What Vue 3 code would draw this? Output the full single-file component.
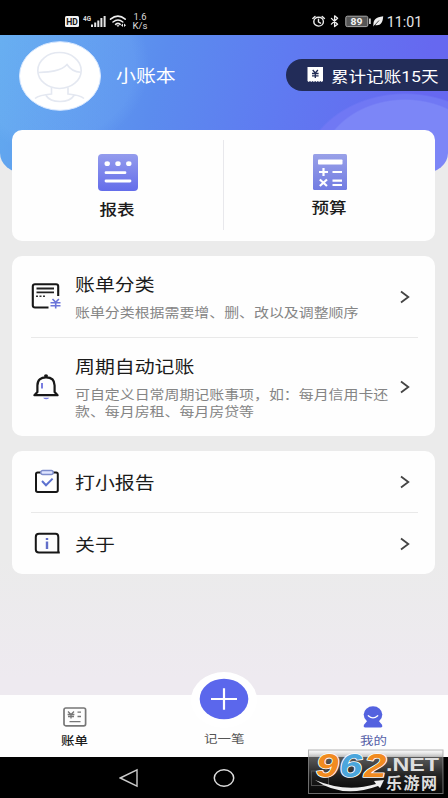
<script setup>
const groups = [
  {
    rows: [
      { title: '账单分类', lines: ['账单分类根据需要增、删、改以及调整顺序'], icon: 'bill', kind: 'single' },
      {
        title: '周期自动记账',
        lines: ['可自定义日常周期记账事项，如：每月信用卡还', '款、每月房租、每月房贷等'],
        icon: 'bell',
        kind: 'double'
      }
    ]
  },
  {
    rows: [
      { title: '打小报告', lines: [], icon: 'clip', kind: 'plain' },
      { title: '关于', lines: [], icon: 'info', kind: 'plain' }
    ]
  }
]
</script>

<template>
  <div class="screen">
    <div class="status">
      <svg class="status-left" width="90" height="24" viewBox="0 0 90 24">
        <rect x="0" y="6" width="14" height="11" rx="1.5" fill="#f2f2f2" />
        <text x="1.2" y="14.8" font-size="8.5" font-weight="700" fill="#111" textLength="11.6" lengthAdjust="spacingAndGlyphs">HD</text>
        <text x="18" y="11" font-size="7" font-weight="700" fill="#ddd" textLength="8" lengthAdjust="spacingAndGlyphs">4G</text>
        <g fill="#e4e4e4">
          <rect x="26" y="14.5" width="2" height="2.5" /><rect x="29.2" y="12.5" width="2" height="4.5" />
          <rect x="32.3" y="10.5" width="2" height="6.5" /><rect x="35.4" y="8" width="2" height="9" />
          <rect x="38.6" y="6" width="2" height="11" />
        </g>
        <g fill="none" stroke="#eee" stroke-width="1.6" stroke-linecap="round">
          <path d="M45.5 9.2Q53 3.2 60.2 9.2M48 12Q53 8 57.8 12M50.6 14.3Q53 12.5 55.2 14.3" />
        </g>
        <path d="M51.3 15.2h3.2L53 17zM56 15.2l2-1.7v3.4zM61 15.2l-2-1.7v3.4z" fill="#eee" />
        <text x="68.5" y="9.5" font-size="8.5" fill="#ddd" textLength="13" lengthAdjust="spacingAndGlyphs">1.6</text>
        <text x="67.5" y="19.3" font-size="8.5" fill="#ddd" textLength="15" lengthAdjust="spacingAndGlyphs">K/s</text>
      </svg>
      <svg class="status-right" width="112" height="24" viewBox="0 0 112 24">
        <g fill="none" stroke="#eee" stroke-width="1.4" stroke-linecap="round" stroke-linejoin="round">
          <ellipse cx="6.6" cy="11.7" rx="4.8" ry="4.4" />
          <path d="M6.5 9.2V12l2 1.2M.8 8.4 3 6.4M10.2 6.4l2.2 2" />
          <path d="M19.4 8.4l6.2 5.8-3 2.3V5.8l3 2.5-6.2 5.8" stroke-width="1.3" />
        </g>
        <rect x="33.8" y="6.2" width="22" height="10.4" rx="1.5" fill="#555" stroke="#aaa" />
        <rect x="57" y="8.5" width="1.8" height="5.5" fill="#ccc" />
        <text x="38.6" y="14.7" font-size="9" font-weight="700" fill="#f2f2f2" textLength="12" lengthAdjust="spacingAndGlyphs">89</text>
        <path d="M61.4 16.5C61 9 64 7.2 71.2 6.3 70.8 13.4 68 16.2 62.8 15z" fill="#eee" />
        <path d="m62 16 5-5.5" stroke="#000" stroke-width=".7" />
        <text x="74.8" y="16.5" font-size="14" fill="#e6e6e6" textLength="35.5" lengthAdjust="spacingAndGlyphs">11:01</text>
      </svg>
    </div>

    <header class="hero">
      <svg class="avatar" width="82" height="70" viewBox="0 0 82 70">
        <ellipse cx="41" cy="35" rx="40.5" ry="34.3" fill="#fff" stroke="#d6e7ff" />
        <g fill="none" stroke="#e4e8f1" stroke-width="1.6">
          <ellipse cx="40.5" cy="29.5" rx="21.7" ry="18" />
          <path d="M19.5 31.5C29 31 42 30.5 48 23.5Q53 31 61.5 31.2" />
          <path d="M32.5 46.5v6.5Q20 54 16 57.5M49 46.5v6.5Q61 54 65 57.5M27 54.5c5 8 23 8 28 0" />
        </g>
      </svg>
      <div class="name"><span class="wide">小账本</span></div>
      <div class="streak">
        <svg width="17" height="16" viewBox="0 0 17 16">
          <path d="M.5 0h15.5v14l-1.3 1-1.3-1-1.3 1-1.3-1-1.3 1-1.3-1-1.3 1-1.3-1-1.3 1-1.3-1-1.3 1L.5 14z" fill="#fff" />
          <path d="m5.7 3 2.6 3 2.6-3M5 6.5h6.6M5 8.8h6.6M8.3 6v5" stroke="#222d56" stroke-width="1.3" fill="none" />
        </svg>
        <span class="wide">累计记账15天</span>
      </div>
    </header>

    <main class="content">
      <section class="card overview">
        <div class="entry">
          <svg width="40" height="37" viewBox="0 0 40 37">
            <defs><linearGradient id="report" x2="0" y2="1"><stop stop-color="#949ced" /><stop offset="1" stop-color="#646dea" /></linearGradient></defs>
            <rect width="40" height="37" rx="4" fill="url(#report)" />
            <g fill="#fff"><ellipse cx="9.2" cy="9.7" rx="2.7" ry="2.4" /><ellipse cx="20" cy="9.7" rx="2.7" ry="2.4" /><ellipse cx="30.8" cy="9.7" rx="2.7" ry="2.4" /></g>
            <path d="M8 18.7h19M8 27h24" stroke="#fff" stroke-width="2.8" stroke-linecap="round" />
          </svg>
          <span class="wide">报表</span>
        </div>
        <i class="divider"></i>
        <div class="entry budget">
          <svg width="34" height="36" viewBox="0 0 34 36">
            <defs><linearGradient id="budget" x2="0" y2="1"><stop stop-color="#99a1e8" /><stop offset="1" stop-color="#727ce2" /></linearGradient></defs>
            <rect width="34" height="36" rx="1.5" fill="url(#budget)" />
            <rect x="5" y="5.5" width="24.5" height="5" rx=".8" fill="#fff" />
            <path d="M6 18h9M10.5 14v8M19.5 18H29M6.8 25.5l7.2 6.5M14 25.5 6.8 32M19.5 26.6H29M19.5 31H29" stroke="#fff" stroke-width="2.2" />
          </svg>
          <span class="wide">预算</span>
        </div>
      </section>

      <section v-for="(group, g) in groups" :key="g" class="card list">
        <div v-for="row in group.rows" :key="row.title" class="row" :class="row.kind">
          <div class="glyph">
            <svg v-if="row.icon === 'bill'" width="32" height="30" viewBox="0 0 32 30" fill="none">
              <path d="M17.5 25.5H4Q1.8 25.5 1.8 23.5V4.2Q1.8 2.2 4 2.2H25Q27.2 2.2 27.2 4.2V14" stroke="#171717" stroke-width="2.1" />
              <path d="M5.5 6.5h17.5M5.5 10.3h17.5" stroke="#222" stroke-width="1.8" />
              <path d="M5 14.3h10" stroke="#333" stroke-width="1.5" stroke-dasharray="2 1.5" />
              <path d="m21.5 17 3.2 3.3 3.2-3.3M19.5 20.8h10M19.5 23.8h10M24.7 20v6.6" stroke="#6b75d9" stroke-width="1.6" />
            </svg>
            <svg v-else-if="row.icon === 'bell'" class="bell" width="28" height="28" viewBox="0 0 28 28" fill="none">
              <ellipse cx="14" cy="2.8" rx="2" ry="1.6" fill="#171717" />
              <path d="M5.4 19V12.5C5.4 7 8.8 4.3 14 4.3s8.6 2.7 8.6 8.2V19l3 3.2H2.4z" stroke="#171717" stroke-width="2.2" stroke-linecap="round" stroke-linejoin="round" />
              <path d="M10 10v5.5" stroke="#7a7ee0" stroke-width="2" />
              <path d="M11 24.7h6.4q-3.2 3.2-6.4 0z" fill="#7a7ee0" />
            </svg>
            <svg v-else-if="row.icon === 'clip'" class="clip" width="26" height="25" viewBox="0 0 26 25" fill="none">
              <rect x="2" y="3.4" width="21.8" height="19.5" rx="1.7" stroke="#171717" stroke-width="2" />
              <rect x="6.8" y="1.5" width="12.4" height="4" rx="2" fill="#dfe5ff" stroke="#7d8ccb" stroke-width="1.4" />
              <path d="m8 12 4 4.2 6.6-6.6" stroke="#5c71cf" stroke-width="2" />
            </svg>
            <svg v-else class="info" width="27" height="23" viewBox="0 0 27 23" fill="none">
              <path d="M5 1.8H21.5Q24.3 1.8 24.3 5V20.5H5Q1.8 20.5 1.8 17.5V5Q1.8 1.8 5 1.8zM23 20.5h2.8" stroke="#171717" stroke-width="2" />
              <path d="M13 6v2M13 9.5V17" stroke="#626fc9" stroke-width="2.4" />
            </svg>
          </div>
          <div class="copy">
            <div class="title"><span class="wide">{{ row.title }}</span></div>
            <div v-if="row.lines.length" class="detail">
              <div v-for="line in row.lines" :key="line"><span class="wide">{{ line }}</span></div>
            </div>
          </div>
          <svg class="chevron" width="12" height="16" viewBox="0 0 12 16"><path d="m2 2.5 7.3 5.5L2 13.5" fill="none" stroke="#444" stroke-width="1.8" /></svg>
        </div>
      </section>
    </main>

    <nav class="tabs">
      <div class="tab">
        <svg width="24" height="20" viewBox="0 0 24 20" fill="none" stroke="#777">
          <rect x="1" y="1" width="21.6" height="17.8" rx="1.8" stroke-width="1.7" />
          <path d="m5 4.5 3 3 3-3M4.6 7.5h6.8M5 9.5h6M8 7v4.5M14.5 5.2H18M14.5 9.5H18M6.5 14.6h11" stroke-width="1.3" />
        </svg>
        <span class="wide">账单</span>
      </div>
      <div class="tab add">
        <svg width="66" height="56" viewBox="0 0 66 56">
          <ellipse cx="33" cy="28" rx="33" ry="28" fill="#fff" />
          <ellipse cx="33" cy="27" rx="24.3" ry="20.3" fill="#5b67ec" />
          <path d="M20 27h26M33 16.3v21.4" stroke="#fff" stroke-width="2.2" />
        </svg>
        <span class="wide">记一笔</span>
      </div>
      <div class="tab mine">
        <svg width="20" height="22" viewBox="0 0 20 22">
          <ellipse cx="10" cy="8.6" rx="9.3" ry="8.3" fill="#5462df" />
          <path d="M5 14 1 18.8q-1 2.7 1.3 2.7h15.4q2.3 0 1.3-2.7L15 14z" fill="#5462df" />
          <path d="M5.3 9.8Q10 14 14.7 9.8" fill="none" stroke="#fff" stroke-width="1.3" stroke-linecap="round" />
        </svg>
        <span class="wide">我的</span>
      </div>
    </nav>

    <div class="system">
      <svg width="20" height="20" viewBox="0 0 20 20"><path d="M1.2 10 18 1.8v16.4z" fill="none" stroke="#ccc" stroke-width="1.4" /></svg>
      <svg width="22" height="20" viewBox="0 0 22 20"><ellipse cx="11" cy="10" rx="9.7" ry="8.2" fill="none" stroke="#ddd" stroke-width="1.5" /></svg>
      <svg width="20" height="20" viewBox="0 0 20 20"><rect x="1.5" y="3" width="17" height="14.5" fill="none" stroke="#888" /></svg>
    </div>

    <svg class="mark" width="136" height="58" viewBox="0 -12 136 58">
      <defs><linearGradient id="shade" x2="0" y2="1"><stop stop-color="#ddd" stop-opacity=".12" /><stop offset=".17" stop-color="#888" stop-opacity=".65" /><stop offset=".55" stop-color="#333" stop-opacity=".75" /><stop offset="1" stop-color="#111" stop-opacity=".4" /></linearGradient></defs>
      <rect x=".5" y="1" width="134.5" height="43.5" fill="url(#shade)" stroke="#999" stroke-opacity=".7" />
      <g class="digits" font-size="33" paint-order="stroke" stroke="#fff" stroke-width="1.6" stroke-linejoin="round">
        <text x="8" y="27.5" fill="#f18b20" textLength="22.5" lengthAdjust="spacingAndGlyphs">9</text>
        <text x="31.5" y="27.5" fill="#4ba6dc" textLength="22.5" lengthAdjust="spacingAndGlyphs">6</text>
        <text x="56" y="27.5" fill="#f18b20" textLength="22.5" lengthAdjust="spacingAndGlyphs">2</text>
      </g>
      <text class="net" x="78" y="22" font-size="18.5" fill="#dedede" textLength="53" lengthAdjust="spacingAndGlyphs">.NET</text>
      <text x="78" y="40" font-size="16" font-weight="700" fill="#ddd" textLength="51" lengthAdjust="spacing">乐游网</text>
      <path d="M7 31Q38 44 68 35l-2-3 10-1-4 8-2-2Q34 50 7 31z" fill="#eee" />
    </svg>
  </div>
</template>

<style>
body { margin: 0; background: #000; }
</style>

<style scoped>
.screen {
  position: relative;
  display: flex;
  flex-direction: column;
  width: 448px;
  height: 798px;
  overflow: hidden;
  background: linear-gradient(#ebebeb 70%, #eeeaf0 85%);
  color: #1b1b1b;
  font-family: Roboto, "Noto Sans CJK SC", sans-serif;
}
.wide { display: inline-block; white-space: nowrap; transform: scaleX(1.17); }
.status {
  display: flex;
  justify-content: space-between;
  flex: none;
  box-sizing: border-box;
  height: 35px;
  padding: 10px 24px 0 65px;
  background: #000;
}
.hero {
  display: flex;
  align-items: flex-start;
  flex: none;
  box-sizing: border-box;
  height: 138px;
  padding: 6px 0 0 19px;
  border-radius: 0 0 24px 24px / 0 0 20px 20px;
  background:
    radial-gradient(ellipse 86px 70px at 405px 134px, #7c86f7 98%, transparent 100%),
    radial-gradient(ellipse 104px 84px at 405px 142px, #7078f4 98%, transparent 100%),
    radial-gradient(ellipse 97px 88px at 52px 30px, rgba(130, 190, 250, .16) 85%, transparent),
    linear-gradient(105deg, #63acef 0%, #5b8cee 35%, #5f7bf1 60%, #6668f0 90%);
}
.name { margin: 23px 0 0 15px; color: #fff; font-size: 17px; line-height: 24px; }
.name .wide { transform-origin: left; }
.streak {
  display: flex;
  align-items: center;
  gap: 7px;
  box-sizing: border-box;
  width: 162px;
  height: 32px;
  margin: 18px 0 0 auto;
  padding-left: 21px;
  border-radius: 17px 0 0 17px;
  background: #222c58;
  color: #fff;
  font-size: 15px;
}
.streak .wide { transform-origin: left; }
.content { display: flex; flex: 1; flex-direction: column; gap: 15.5px; margin-top: -43px; padding: 0 13px 0 12px; }
.card { border-radius: 10px; background: #fefefe; }
.overview { display: flex; height: 110.5px; }
.entry {
  display: flex;
  flex: 1;
  flex-direction: column;
  align-items: center;
  gap: 7px;
  padding-top: 24px;
  font-size: 15px;
  font-weight: 500;
  line-height: 24px;
}
.budget { gap: 6px; }
.divider { width: 1px; height: 90px; margin-top: 10px; background: #e8e8ec; }
.row { display: flex; margin: 0 17px 0 18.5px; }
.row + .row { border-top: 1px solid #e9e9e9; }
.glyph { display: flex; flex: none; align-items: center; width: 44.5px; }
.bell { margin-left: 1px; }
.clip, .info { margin-left: 3px; }
.copy { flex: 1; min-width: 0; }
.copy .wide { transform-origin: left; }
.title { font-size: 17px; line-height: 24px; }
.detail { color: #858585; font-size: 12.75px; line-height: 17px; }
.chevron { flex: none; align-self: center; margin-right: 7px; }
.single { height: 81px; }
.single .copy, .double .copy { padding-top: 17px; }
.single .detail, .double .detail { margin-top: 7px; }
.double { height: 97.5px; }
.plain { height: 61px; align-items: center; }
.plain .copy { padding-top: 2px; }
.tabs { display: flex; flex: none; height: 62px; background: #fefefe; }
.tab {
  display: flex;
  flex: 1;
  flex-direction: column;
  align-items: center;
  gap: 6px;
  padding-top: 12px;
  font-size: 11.5px;
  font-weight: 500;
  line-height: 17px;
}
.add { gap: 3px; margin-top: -23px; padding-top: 0; color: #555; font-weight: 400; }
.mine { gap: 5px; padding-top: 11px; color: #5661a8; font-weight: 400; }
.system { display: flex; flex: none; align-items: center; justify-content: center; gap: 74.5px; height: 41px; background: #000; }
.mark { position: absolute; left: 308px; top: 737px; }
.digits { font-family: "Liberation Sans", sans-serif; font-style: italic; font-weight: 700; }
.net { font-family: "Liberation Sans", sans-serif; font-weight: 700; }
</style>
